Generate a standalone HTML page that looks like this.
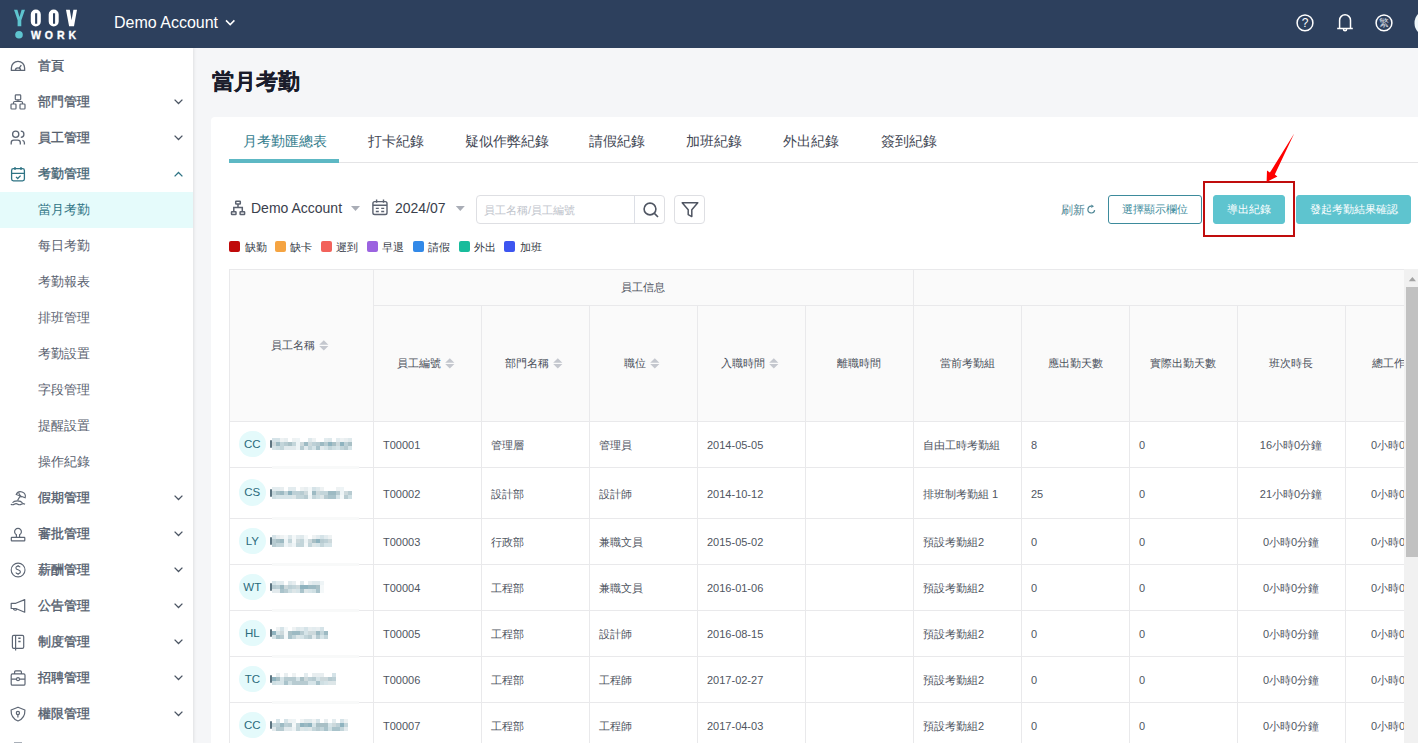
<!DOCTYPE html>
<html><head><meta charset="utf-8"><style>
*{box-sizing:border-box;margin:0;padding:0}
html,body{width:1418px;height:743px;overflow:hidden;background:#f5f6f8;font-family:"Liberation Sans",sans-serif;position:relative}
.abs{position:absolute}
.ab{position:absolute}
#hdr{left:0;top:0;width:1418px;height:48px;background:#2d405d}
#side{left:0;top:48px;width:193px;height:695px;background:#fff;box-shadow:1px 0 3px rgba(0,0,0,.09)}
.si{position:absolute;left:0;width:193px;height:36px;font-size:13px;line-height:36px;color:#5a6270}
.si .t{position:absolute;left:38px;top:0}
.si.p .t{font-weight:normal;-webkit-text-stroke:0.35px #535d6d;color:#535d6d}
.si.act .t{color:#2e7384}
.si.cur{background:#e5fbfb}
.si.cur .t{color:#2e7384}
#title{left:211.5px;top:67px;font-size:21.6px;font-weight:bold;color:#1a1c2b;-webkit-text-stroke:0.25px #1a1c2b;line-height:30px}
#card{left:211px;top:117px;width:1220px;height:640px;background:#fff;border-radius:4px}
.tab{position:absolute;top:131.5px;font-size:14px;color:#3f4653;line-height:18px;white-space:nowrap}
.tab.on{color:#347d8e}
.tb{font-size:14px;line-height:18px;color:#3a404c}
.inp{border:1px solid #dedfe3;border-radius:4px;background:#fff}
.inp span{position:absolute;left:7px;top:6px;font-size:11px;line-height:16px;color:#c0c4cc}
.btn{border-radius:3px;font-size:11px;line-height:27px;text-align:center;white-space:nowrap}
.btn.ol{border:1px solid #3d8b9c;color:#3d8b9c;background:#fff}
.btn.fl{background:#5ec4cf;color:#fff;border:1px solid #5ec4cf}
.lg{font-size:11px;line-height:16px;color:#363c47}
.th{font-size:11px;line-height:16px;color:#4a505b;white-space:nowrap}
.td{font-size:11px;line-height:15px;color:#4f555f;white-space:nowrap}
.av{width:26.6px;height:26.6px;border-radius:50%;background:#e4fafb;color:#2a6b7c;font-size:11.5px;line-height:26.6px;text-align:center}
</style></head><body>
<div id="hdr" class="abs">
<svg class="abs" style="left:0;top:0" width="1418" height="48">
 <path d="M14 9.8h3.4l2.1 7.2 2.1-7.2H25l-3.7 10.4v6H17.6v-6z" fill="#5ec4cf"/>
 <path d="M35.8 9.6a5 5 0 0 1 5 5v6.9a5 5 0 0 1-10 0v-6.9a5 5 0 0 1 5-5zM35.1 13.2v10.6h2.1V13.2z" fill="#fff" fill-rule="evenodd"/>
 <path d="M53.7 9.6a5 5 0 0 1 5 5v6.9a5 5 0 0 1-10 0v-6.9a5 5 0 0 1 5-5zM53 13.2v10.6h2.1V13.2z" fill="#fff" fill-rule="evenodd"/>
 <path d="M66 9.8h3.8l1.8 10.5 1.8-10.5H77l-3 16.4h-4.9z" fill="#fff"/>
 <circle cx="19" cy="34.7" r="3.8" fill="#5ec4cf"/>
 <text x="31" y="39.2" font-family="Liberation Sans" font-weight="bold" font-size="10.5" fill="#fff" stroke="#fff" stroke-width="0.35" textLength="45" lengthAdjust="spacing">WORK</text>
 <path d="M226 20.4l4.2 4.2 4.2-4.2" stroke="#fff" stroke-width="1.5" fill="none"/>
 <g stroke="#fff" fill="none" stroke-width="1.5">
  <circle cx="1305" cy="22.9" r="7.9"/>
  <path d="M1339.6 28.4v-8.2a5.45 5.45 0 0 1 10.9 0v8.2M1337.2 28.6h15.6M1343.5 29.2a1.55 1.55 0 0 0 3.1 0"/>
  <circle cx="1384" cy="22.9" r="7.9"/>
 </g>
 <text x="1305" y="27" font-family="Liberation Sans" font-size="12" fill="#fff" text-anchor="middle">?</text>
 <text x="1384" y="26.3" font-size="9.5" fill="#d9dde3" text-anchor="middle">繁</text>
 <circle cx="1428" cy="23" r="13.5" fill="#eef6f9"/>
</svg>
<div class="abs" style="left:114px;top:13px;font-size:16px;line-height:20px;color:#fff">Demo Account</div>
</div>

<div id="side" class="abs"></div>
<div class="si p" style="top:48px"><span class="t">首頁</span></div>
<div class="si p" style="top:84px"><span class="t">部門管理</span></div>
<div class="si p" style="top:120px"><span class="t">員工管理</span></div>
<div class="si p act" style="top:156px"><span class="t">考勤管理</span></div>
<div class="si s cur" style="top:192px"><span class="t">當月考勤</span></div>
<div class="si s" style="top:228px"><span class="t">每日考勤</span></div>
<div class="si s" style="top:264px"><span class="t">考勤報表</span></div>
<div class="si s" style="top:300px"><span class="t">排班管理</span></div>
<div class="si s" style="top:336px"><span class="t">考勤設置</span></div>
<div class="si s" style="top:372px"><span class="t">字段管理</span></div>
<div class="si s" style="top:408px"><span class="t">提醒設置</span></div>
<div class="si s" style="top:444px"><span class="t">操作紀錄</span></div>
<div class="si p" style="top:480px"><span class="t">假期管理</span></div>
<div class="si p" style="top:516px"><span class="t">審批管理</span></div>
<div class="si p" style="top:552px"><span class="t">薪酬管理</span></div>
<div class="si p" style="top:588px"><span class="t">公告管理</span></div>
<div class="si p" style="top:624px"><span class="t">制度管理</span></div>
<div class="si p" style="top:660px"><span class="t">招聘管理</span></div>
<div class="si p" style="top:696px"><span class="t">權限管理</span></div>
<svg class="abs" style="left:0;top:0" width="193" height="743"><g stroke="#5d6674" fill="none" stroke-width="1.3"><path d="M11.4 70.4V68A6.6 6.6 0 0 1 24.6 68V70.4Z"/><path d="M15.4 70.4A2.6 2.6 0 0 1 20.6 70.4M19.4 67.9L21.3 65.2"/></g><g stroke="#5d6674" fill="none" stroke-width="1.2"><rect x="15.3" y="94.8" width="5.4" height="5" rx="0.8"/><rect x="11" y="104" width="5" height="5" rx="0.8"/><rect x="20" y="104" width="5" height="5" rx="0.8"/><path d="M18 99.8V101.5M13.5 104V102.7a1.2 1.2 0 0 1 1.2-1.2h6.6a1.2 1.2 0 0 1 1.2 1.2V104"/></g><g stroke="#5d6674" fill="none" stroke-width="1.3"><circle cx="15.7" cy="134.2" r="3.1"/><path d="M20.8 131.1a3.1 3.1 0 0 1 0 6.2"/><path d="M11.2 144.6v-1.8a2.6 2.6 0 0 1 2.6-2.6h3.9a2.6 2.6 0 0 1 2.6 2.6v1.8"/><path d="M22.4 140.4a2.6 2.6 0 0 1 2 2.4v1.8"/></g><g stroke="#2e7384" fill="none" stroke-width="1.3"><rect x="11.6" y="168.6" width="12.8" height="12.2" rx="1.8"/><path d="M11.6 173.3h12.8M15 167v3M21 167v3M16 176.9l1.7 1.6 2.9-2.9"/></g><g stroke="#5d6674" fill="none" stroke-width="1.1"><path d="M16.2 494.5a4.8 4.8 0 0 1 9 3.2z"/><path d="M18.7 493l2.6 4.6"/><path d="M20.2 496l-2.6 4.4"/><path d="M12.5 502.8c1.6-2.6 8-2.6 10 0"/><path d="M10.8 504.2c1.3 .9 2.2 .9 3.5 0s2.2-.9 3.5 0 2.2 .9 3.5 0 2.2-.9 3.7 0"/></g><g stroke="#5d6674" fill="none" stroke-width="1.2"><path d="M16.4 537.2v-2.5a3.4 3.4 0 1 1 3.2 0v2.5"/><rect x="11.3" y="537.3" width="13.5" height="3.5" rx="0.6"/></g><g stroke="#5d6674" fill="none" stroke-width="1.1"><circle cx="18.1" cy="570" r="6.9"/><path d="M20.2 567.3c-.4-.8-1.2-1.2-2.1-1.2-1.3 0-2.2.8-2.2 1.8 0 2.4 4.5 1.3 4.5 3.9 0 1.1-1 1.9-2.3 1.9-1 0-1.9-.5-2.3-1.3M18.1 565v1.1M18.1 573.7v1.2"/></g><g stroke="#5d6674" fill="none" stroke-width="1.2" stroke-linejoin="round"><path d="M11.2 603.3h4.6l8.9-3.7v12.6l-8.9-3.7h-4.6z"/><path d="M13.2 608.5a2 2 0 0 0 3.8 .4"/></g><g stroke="#5d6674" fill="none" stroke-width="1.2"><rect x="12.4" y="635.4" width="11.3" height="13" rx="1.3"/><path d="M15.6 635.4v15"/><path d="M18.3 638.3h2.3M18.3 641.5h2.3" stroke-width="1.6"/></g><g stroke="#5d6674" fill="none" stroke-width="1.2"><rect x="11.2" y="673.9" width="13.8" height="11.3" rx="1.3"/><path d="M14.6 673.9v-2a1 1 0 0 1 1-1h4.8a1 1 0 0 1 1 1v2M11.2 679.2h5.3M19.6 679.2h5.4"/><circle cx="18" cy="679.2" r="1.5"/></g><g stroke="#5d6674" fill="none" stroke-width="1.2" stroke-linejoin="round"><path d="M18 707.2l6.9 2.8c.2 5.2-2.3 9.2-6.9 11-4.6-1.8-7.1-5.8-6.9-11z"/><circle cx="17.9" cy="713" r="1.6"/><path d="M17.9 714.6v2.8"/></g><path d="M174.6 99.6l3.9 3.9 3.9-3.9" stroke="#4b5563" stroke-width="1.3" fill="none"/><path d="M174.6 135.6l3.9 3.9 3.9-3.9" stroke="#4b5563" stroke-width="1.3" fill="none"/><path d="M174.6 176.4l3.9-3.9 3.9 3.9" stroke="#2e7384" stroke-width="1.3" fill="none"/><path d="M174.6 495.6l3.9 3.9 3.9-3.9" stroke="#4b5563" stroke-width="1.3" fill="none"/><path d="M174.6 531.6l3.9 3.9 3.9-3.9" stroke="#4b5563" stroke-width="1.3" fill="none"/><path d="M174.6 567.6l3.9 3.9 3.9-3.9" stroke="#4b5563" stroke-width="1.3" fill="none"/><path d="M174.6 603.6l3.9 3.9 3.9-3.9" stroke="#4b5563" stroke-width="1.3" fill="none"/><path d="M174.6 639.6l3.9 3.9 3.9-3.9" stroke="#4b5563" stroke-width="1.3" fill="none"/><path d="M174.6 675.6l3.9 3.9 3.9-3.9" stroke="#4b5563" stroke-width="1.3" fill="none"/><path d="M174.6 711.6l3.9 3.9 3.9-3.9" stroke="#4b5563" stroke-width="1.3" fill="none"/><rect x="14" y="742" width="8" height="1" fill="#a9afb8"/></svg>
<div id="title" class="abs">當月考勤</div>
<div id="card" class="abs"></div>
<div class="tab on" style="left:243px">月考勤匯總表</div>
<div class="tab" style="left:367.5px">打卡紀錄</div>
<div class="tab" style="left:464.5px">疑似作弊紀錄</div>
<div class="tab" style="left:588.5px">請假紀錄</div>
<div class="tab" style="left:685.5px">加班紀錄</div>
<div class="tab" style="left:782.5px">外出紀錄</div>
<div class="tab" style="left:880.5px">簽到紀錄</div>
<div class="abs" style="left:229px;top:162px;width:1189px;height:1px;background:#e4e4e6"></div>
<div class="abs" style="left:229px;top:159px;width:110px;height:4px;background:#5db8c4"></div>
<div class="abs tb" style="left:251px;top:199px">Demo Account</div>
<div class="abs tb" style="left:395px;top:199px">2024/07</div>
<div class="abs inp" style="left:476px;top:195px;width:189px;height:29px"><span>員工名稱/員工編號</span></div>
<div class="abs" style="left:634px;top:196px;width:1px;height:27px;background:#dcdfe6"></div>
<div class="abs inp" style="left:674px;top:195px;width:31px;height:29px"></div>
<div class="abs" style="left:1061px;top:201.5px;font-size:12px;line-height:16px;color:#4f8796">刷新</div>
<div class="abs btn ol" style="left:1108px;top:195px;width:94px;height:29px">選擇顯示欄位</div>
<div class="abs btn fl" style="left:1213px;top:195px;width:72px;height:29px">導出紀錄</div>
<div class="abs btn fl" style="left:1296px;top:195px;width:115px;height:29px">發起考勤結果確認</div>
<div class="abs" style="left:229.0px;top:241px;width:11px;height:11px;border-radius:2px;background:#c00a0a"></div>
<div class="abs lg" style="left:244.5px;top:238.5px">缺勤</div>
<div class="abs" style="left:274.9px;top:241px;width:11px;height:11px;border-radius:2px;background:#f5a442"></div>
<div class="abs lg" style="left:290.4px;top:238.5px">缺卡</div>
<div class="abs" style="left:320.8px;top:241px;width:11px;height:11px;border-radius:2px;background:#f2625b"></div>
<div class="abs lg" style="left:336.3px;top:238.5px">遲到</div>
<div class="abs" style="left:366.7px;top:241px;width:11px;height:11px;border-radius:2px;background:#9b63e0"></div>
<div class="abs lg" style="left:382.2px;top:238.5px">早退</div>
<div class="abs" style="left:412.6px;top:241px;width:11px;height:11px;border-radius:2px;background:#3289e8"></div>
<div class="abs lg" style="left:428.1px;top:238.5px">請假</div>
<div class="abs" style="left:458.5px;top:241px;width:11px;height:11px;border-radius:2px;background:#18bc9c"></div>
<div class="abs lg" style="left:474.0px;top:238.5px">外出</div>
<div class="abs" style="left:504.4px;top:241px;width:11px;height:11px;border-radius:2px;background:#3d55f0"></div>
<div class="abs lg" style="left:519.9px;top:238.5px">加班</div>
<svg class="abs" style="left:0;top:0" width="1418" height="260"><g stroke="#5b6270" fill="none" stroke-width="1.5"><rect x="235.7" y="201.2" width="4.6" height="2.9" rx="0.5"/><rect x="231.5" y="211.8" width="4.5" height="2.7" rx="0.5"/><rect x="240.1" y="211.8" width="4.5" height="2.7" rx="0.5"/><path d="M238 204.1v3.5M233.8 211.8v-4.2h8.5v4.2"/></g><path d="M351 206h9l-4.5 5z" fill="#a9adb6"/><g stroke="#5b6270" fill="none" stroke-width="1.4"><rect x="372.9" y="201.6" width="14.1" height="12.9" rx="1.8"/><path d="M372.9 205.2h14.1M376.6 199.4v3.4M383.5 199.4v3.4M375.8 208.4h3M381.2 208.4h3M375.8 211.5h3M381.2 211.5h3"/></g><path d="M455.8 206h9l-4.5 5z" fill="#a9adb6"/><g stroke="#4f5562" fill="none" stroke-width="1.6"><circle cx="650" cy="209" r="5.9"/><path d="M654.4 213.4l3.6 3.6"/></g><path d="M682.2 202.8h15.6l-6 7v6.8l-3.6-2v-4.8z" stroke="#4f5562" stroke-width="1.5" fill="none" stroke-linejoin="round"/><path d="M1094.65 210.2A3.4 3.4 0 1 1 1091.6 206.2" stroke="#4f8796" stroke-width="1.2" fill="none"/><path d="M1091.3 204.5L1094 206.2L1091.3 207.9z" fill="#4f8796"/><rect x="1204" y="182" width="90" height="54" fill="none" stroke="#c00d0d" stroke-width="2"/><path d="M1294.2 133.6L1274.8 174.4L1277.4 176.4L1266.6 181.9L1267 170.6L1269.9 172.6Z" fill="#ff0000"/></svg>
<div class="abs" style="left:229px;top:269px;width:1175px;height:474px;overflow:hidden"><div class="ab" style="left:0;top:0;width:1300px;height:152px;background:#fafafa"></div><div class="ab" style="left:0px;top:0px;width:1300px;height:1px;background:#e9e9eb"></div><div class="ab" style="left:144px;top:36px;width:1300px;height:1px;background:#e9e9eb"></div><div class="ab" style="left:0px;top:152px;width:1300px;height:1px;background:#e9e9eb"></div><div class="ab" style="left:0px;top:198px;width:1300px;height:1px;background:#e9e9eb"></div><div class="ab" style="left:0px;top:249px;width:1300px;height:1px;background:#e9e9eb"></div><div class="ab" style="left:0px;top:295px;width:1300px;height:1px;background:#e9e9eb"></div><div class="ab" style="left:0px;top:341px;width:1300px;height:1px;background:#e9e9eb"></div><div class="ab" style="left:0px;top:387px;width:1300px;height:1px;background:#e9e9eb"></div><div class="ab" style="left:0px;top:433px;width:1300px;height:1px;background:#e9e9eb"></div><div class="ab" style="left:0px;top:479px;width:1300px;height:1px;background:#e9e9eb"></div><div class="ab" style="left:0px;top:0px;width:1px;height:800px;background:#e9e9eb"></div><div class="ab" style="left:144px;top:0px;width:1px;height:800px;background:#e9e9eb"></div><div class="ab" style="left:252px;top:36px;width:1px;height:800px;background:#e9e9eb"></div><div class="ab" style="left:360px;top:36px;width:1px;height:800px;background:#e9e9eb"></div><div class="ab" style="left:468px;top:36px;width:1px;height:800px;background:#e9e9eb"></div><div class="ab" style="left:576px;top:36px;width:1px;height:800px;background:#e9e9eb"></div><div class="ab" style="left:684px;top:0px;width:1px;height:800px;background:#e9e9eb"></div><div class="ab" style="left:792px;top:36px;width:1px;height:800px;background:#e9e9eb"></div><div class="ab" style="left:900px;top:36px;width:1px;height:800px;background:#e9e9eb"></div><div class="ab" style="left:1008px;top:36px;width:1px;height:800px;background:#e9e9eb"></div><div class="ab" style="left:1116px;top:36px;width:1px;height:800px;background:#e9e9eb"></div><div class="ab" style="left:1224px;top:36px;width:1px;height:800px;background:#e9e9eb"></div><div class="ab th" style="left:42.0px;top:68px">員工名稱</div><svg class="ab" style="left:89.5px;top:70.5px" width="11" height="11"><path d="M0.2 4.7L4.8 0.2L9.4 4.7z M0.2 5.9L4.8 10.4L9.4 5.9z" fill="#c4c7ce"/></svg><div class="ab th" style="left:392.0px;top:10px">員工信息</div><div class="ab th" style="left:168.0px;top:86px">員工編號</div><svg class="ab" style="left:215.5px;top:88.5px" width="11" height="11"><path d="M0.2 4.7L4.8 0.2L9.4 4.7z M0.2 5.9L4.8 10.4L9.4 5.9z" fill="#c4c7ce"/></svg><div class="ab th" style="left:276.0px;top:86px">部門名稱</div><svg class="ab" style="left:323.5px;top:88.5px" width="11" height="11"><path d="M0.2 4.7L4.8 0.2L9.4 4.7z M0.2 5.9L4.8 10.4L9.4 5.9z" fill="#c4c7ce"/></svg><div class="ab th" style="left:395.0px;top:86px">職位</div><svg class="ab" style="left:420.5px;top:88.5px" width="11" height="11"><path d="M0.2 4.7L4.8 0.2L9.4 4.7z M0.2 5.9L4.8 10.4L9.4 5.9z" fill="#c4c7ce"/></svg><div class="ab th" style="left:492.0px;top:86px">入職時間</div><svg class="ab" style="left:539.5px;top:88.5px" width="11" height="11"><path d="M0.2 4.7L4.8 0.2L9.4 4.7z M0.2 5.9L4.8 10.4L9.4 5.9z" fill="#c4c7ce"/></svg><div class="ab th" style="left:608.0px;top:86px">離職時間</div><div class="ab th" style="left:710.5px;top:86px">當前考勤組</div><div class="ab th" style="left:818.5px;top:86px">應出勤天數</div><div class="ab th" style="left:921.0px;top:86px">實際出勤天數</div><div class="ab th" style="left:1040.0px;top:86px">班次時長</div><div class="ab th" style="left:1142.5px;top:86px">總工作時長</div><div class="ab av" style="left:10px;top:161.7px">CC</div><div class="ab" style="left:41px;top:171.0px;width:1.6px;height:8px;background:#5d7480;border-radius:1px"></div><div class="ab" style="left:43px;top:169.0px;width:4px;height:4px;background:#d5e3e8"></div><div class="ab" style="left:43px;top:173.0px;width:4px;height:4px;background:#cdd9dc"></div><div class="ab" style="left:43px;top:177.0px;width:4px;height:4px;background:#d6e4e8"></div><div class="ab" style="left:47px;top:169.0px;width:4px;height:4px;background:#d5e3e8"></div><div class="ab" style="left:47px;top:173.0px;width:4px;height:4px;background:#9dbac3"></div><div class="ab" style="left:47px;top:177.0px;width:4px;height:4px;background:#cfdfe3"></div><div class="ab" style="left:51px;top:169.0px;width:4px;height:4px;background:#eef2f3"></div><div class="ab" style="left:51px;top:173.0px;width:4px;height:4px;background:#c3d5da"></div><div class="ab" style="left:51px;top:177.0px;width:4px;height:4px;background:#c3d5da"></div><div class="ab" style="left:55px;top:169.0px;width:4px;height:4px;background:#e8eef0"></div><div class="ab" style="left:55px;top:173.0px;width:4px;height:4px;background:#b7cbd1"></div><div class="ab" style="left:55px;top:177.0px;width:4px;height:4px;background:#e2eaed"></div><div class="ab" style="left:59px;top:173.0px;width:4px;height:4px;background:#a9c0c6"></div><div class="ab" style="left:59px;top:177.0px;width:4px;height:4px;background:#e2eaed"></div><div class="ab" style="left:63px;top:169.0px;width:4px;height:4px;background:#eef2f3"></div><div class="ab" style="left:63px;top:173.0px;width:4px;height:4px;background:#c3d5da"></div><div class="ab" style="left:63px;top:177.0px;width:4px;height:4px;background:#e2eaed"></div><div class="ab" style="left:67px;top:169.0px;width:4px;height:4px;background:#eef4f6"></div><div class="ab" style="left:67px;top:173.0px;width:4px;height:4px;background:#eef4f6"></div><div class="ab" style="left:67px;top:177.0px;width:4px;height:4px;background:#eef4f6"></div><div class="ab" style="left:71px;top:173.0px;width:4px;height:4px;background:#cdd9dc"></div><div class="ab" style="left:71px;top:177.0px;width:4px;height:4px;background:#b7cbd1"></div><div class="ab" style="left:75px;top:173.0px;width:4px;height:4px;background:#9dbac3"></div><div class="ab" style="left:75px;top:177.0px;width:4px;height:4px;background:#e2eaed"></div><div class="ab" style="left:79px;top:169.0px;width:4px;height:4px;background:#dfe9ec"></div><div class="ab" style="left:79px;top:173.0px;width:4px;height:4px;background:#cdd9dc"></div><div class="ab" style="left:79px;top:177.0px;width:4px;height:4px;background:#c3d5da"></div><div class="ab" style="left:83px;top:169.0px;width:4px;height:4px;background:#eef2f3"></div><div class="ab" style="left:83px;top:173.0px;width:4px;height:4px;background:#bdd0d6"></div><div class="ab" style="left:83px;top:177.0px;width:4px;height:4px;background:#d6e4e8"></div><div class="ab" style="left:87px;top:173.0px;width:4px;height:4px;background:#b7cbd1"></div><div class="ab" style="left:87px;top:177.0px;width:4px;height:4px;background:#a9c3cb"></div><div class="ab" style="left:91px;top:173.0px;width:4px;height:4px;background:#9dbac3"></div><div class="ab" style="left:91px;top:177.0px;width:4px;height:4px;background:#e2eaed"></div><div class="ab" style="left:95px;top:169.0px;width:4px;height:4px;background:#e3ecef"></div><div class="ab" style="left:95px;top:173.0px;width:4px;height:4px;background:#b7cbd1"></div><div class="ab" style="left:95px;top:177.0px;width:4px;height:4px;background:#d6e4e8"></div><div class="ab" style="left:99px;top:169.0px;width:4px;height:4px;background:#dfe9ec"></div><div class="ab" style="left:99px;top:173.0px;width:4px;height:4px;background:#8fb3bf"></div><div class="ab" style="left:99px;top:177.0px;width:4px;height:4px;background:#c3d5da"></div><div class="ab" style="left:103px;top:173.0px;width:4px;height:4px;background:#a9c0c6"></div><div class="ab" style="left:103px;top:177.0px;width:4px;height:4px;background:#cfdfe3"></div><div class="ab" style="left:107px;top:169.0px;width:4px;height:4px;background:#e3ecef"></div><div class="ab" style="left:107px;top:173.0px;width:4px;height:4px;background:#cdd9dc"></div><div class="ab" style="left:107px;top:177.0px;width:4px;height:4px;background:#d6e4e8"></div><div class="ab" style="left:111px;top:169.0px;width:4px;height:4px;background:#eef2f3"></div><div class="ab" style="left:111px;top:173.0px;width:4px;height:4px;background:#8fb3bf"></div><div class="ab" style="left:111px;top:177.0px;width:4px;height:4px;background:#c3d5da"></div><div class="ab" style="left:115px;top:169.0px;width:4px;height:4px;background:#e8eef0"></div><div class="ab" style="left:115px;top:173.0px;width:4px;height:4px;background:#bdd0d6"></div><div class="ab" style="left:115px;top:177.0px;width:4px;height:4px;background:#b7cbd1"></div><div class="ab" style="left:119px;top:169.0px;width:4px;height:4px;background:#dfe9ec"></div><div class="ab" style="left:119px;top:173.0px;width:4px;height:4px;background:#a9c0c6"></div><div class="ab" style="left:119px;top:177.0px;width:4px;height:4px;background:#d6e4e8"></div><div class="ab" style="left:43px;top:197px;width:87px;height:3px;background:#f8f9f9"></div><div class="ab td" style="left:154px;top:169.0px">T00001</div><div class="ab td" style="left:262px;top:169.0px">管理層</div><div class="ab td" style="left:370px;top:169.0px">管理員</div><div class="ab td" style="left:478px;top:169.0px">2014-05-05</div><div class="ab td" style="left:694px;top:169.0px">自由工時考勤組</div><div class="ab td" style="left:802px;top:169.0px">8</div><div class="ab td" style="left:910px;top:169.0px">0</div><div class="ab td" style="left:1008px;top:169.0px;width:108px;text-align:center">16小時0分鐘</div><div class="ab td" style="left:1116px;top:169.0px;width:108px;text-align:center">0小時0分鐘</div><div class="ab av" style="left:10px;top:210.2px">CS</div><div class="ab" style="left:41px;top:219.5px;width:1.6px;height:8px;background:#5d7480;border-radius:1px"></div><div class="ab" style="left:43px;top:217.5px;width:4px;height:4px;background:#e3ecef"></div><div class="ab" style="left:43px;top:221.5px;width:4px;height:4px;background:#c3d5da"></div><div class="ab" style="left:43px;top:225.5px;width:4px;height:4px;background:#cfdfe3"></div><div class="ab" style="left:47px;top:217.5px;width:4px;height:4px;background:#e3ecef"></div><div class="ab" style="left:47px;top:221.5px;width:4px;height:4px;background:#a9c0c6"></div><div class="ab" style="left:47px;top:225.5px;width:4px;height:4px;background:#d6e4e8"></div><div class="ab" style="left:51px;top:217.5px;width:4px;height:4px;background:#e8eef0"></div><div class="ab" style="left:51px;top:221.5px;width:4px;height:4px;background:#9dbac3"></div><div class="ab" style="left:51px;top:225.5px;width:4px;height:4px;background:#d6e4e8"></div><div class="ab" style="left:55px;top:221.5px;width:4px;height:4px;background:#c3d5da"></div><div class="ab" style="left:55px;top:225.5px;width:4px;height:4px;background:#d6e4e8"></div><div class="ab" style="left:59px;top:217.5px;width:4px;height:4px;background:#e3ecef"></div><div class="ab" style="left:59px;top:221.5px;width:4px;height:4px;background:#8fb3bf"></div><div class="ab" style="left:59px;top:225.5px;width:4px;height:4px;background:#d6e4e8"></div><div class="ab" style="left:63px;top:217.5px;width:4px;height:4px;background:#e3ecef"></div><div class="ab" style="left:63px;top:221.5px;width:4px;height:4px;background:#bdd0d6"></div><div class="ab" style="left:63px;top:225.5px;width:4px;height:4px;background:#dde6e8"></div><div class="ab" style="left:67px;top:221.5px;width:4px;height:4px;background:#bdd0d6"></div><div class="ab" style="left:67px;top:225.5px;width:4px;height:4px;background:#c3d5da"></div><div class="ab" style="left:71px;top:217.5px;width:4px;height:4px;background:#eef2f3"></div><div class="ab" style="left:71px;top:221.5px;width:4px;height:4px;background:#b7cbd1"></div><div class="ab" style="left:71px;top:225.5px;width:4px;height:4px;background:#c3d5da"></div><div class="ab" style="left:75px;top:217.5px;width:4px;height:4px;background:#e8eef0"></div><div class="ab" style="left:75px;top:221.5px;width:4px;height:4px;background:#cdd9dc"></div><div class="ab" style="left:75px;top:225.5px;width:4px;height:4px;background:#b7cbd1"></div><div class="ab" style="left:79px;top:217.5px;width:4px;height:4px;background:#f4f8f9"></div><div class="ab" style="left:79px;top:221.5px;width:4px;height:4px;background:#f4f8f9"></div><div class="ab" style="left:79px;top:225.5px;width:4px;height:4px;background:#eef4f6"></div><div class="ab" style="left:83px;top:217.5px;width:4px;height:4px;background:#d5e3e8"></div><div class="ab" style="left:83px;top:221.5px;width:4px;height:4px;background:#9dbac3"></div><div class="ab" style="left:83px;top:225.5px;width:4px;height:4px;background:#c3d5da"></div><div class="ab" style="left:87px;top:217.5px;width:4px;height:4px;background:#dfe9ec"></div><div class="ab" style="left:87px;top:221.5px;width:4px;height:4px;background:#cdd9dc"></div><div class="ab" style="left:87px;top:225.5px;width:4px;height:4px;background:#cfdfe3"></div><div class="ab" style="left:91px;top:217.5px;width:4px;height:4px;background:#eef2f3"></div><div class="ab" style="left:91px;top:221.5px;width:4px;height:4px;background:#c3d5da"></div><div class="ab" style="left:91px;top:225.5px;width:4px;height:4px;background:#dde6e8"></div><div class="ab" style="left:95px;top:221.5px;width:4px;height:4px;background:#c3d5da"></div><div class="ab" style="left:95px;top:225.5px;width:4px;height:4px;background:#b7cbd1"></div><div class="ab" style="left:99px;top:221.5px;width:4px;height:4px;background:#9dbac3"></div><div class="ab" style="left:99px;top:225.5px;width:4px;height:4px;background:#a9c3cb"></div><div class="ab" style="left:103px;top:221.5px;width:4px;height:4px;background:#9dbac3"></div><div class="ab" style="left:103px;top:225.5px;width:4px;height:4px;background:#a9c3cb"></div><div class="ab" style="left:107px;top:217.5px;width:4px;height:4px;background:#eef2f3"></div><div class="ab" style="left:107px;top:221.5px;width:4px;height:4px;background:#b7cbd1"></div><div class="ab" style="left:107px;top:225.5px;width:4px;height:4px;background:#d6e4e8"></div><div class="ab" style="left:111px;top:217.5px;width:4px;height:4px;background:#eef4f6"></div><div class="ab" style="left:111px;top:221.5px;width:4px;height:4px;background:#eef4f6"></div><div class="ab" style="left:111px;top:225.5px;width:4px;height:4px;background:#f4f8f9"></div><div class="ab" style="left:115px;top:221.5px;width:4px;height:4px;background:#cdd9dc"></div><div class="ab" style="left:115px;top:225.5px;width:4px;height:4px;background:#b7cbd1"></div><div class="ab" style="left:119px;top:221.5px;width:4px;height:4px;background:#b7cbd1"></div><div class="ab" style="left:119px;top:225.5px;width:4px;height:4px;background:#cfdfe3"></div><div class="ab" style="left:43px;top:248px;width:87px;height:3px;background:#f8f9f9"></div><div class="ab td" style="left:154px;top:217.5px">T00002</div><div class="ab td" style="left:262px;top:217.5px">設計部</div><div class="ab td" style="left:370px;top:217.5px">設計師</div><div class="ab td" style="left:478px;top:217.5px">2014-10-12</div><div class="ab td" style="left:694px;top:217.5px">排班制考勤組 1</div><div class="ab td" style="left:802px;top:217.5px">25</div><div class="ab td" style="left:910px;top:217.5px">0</div><div class="ab td" style="left:1008px;top:217.5px;width:108px;text-align:center">21小時0分鐘</div><div class="ab td" style="left:1116px;top:217.5px;width:108px;text-align:center">0小時0分鐘</div><div class="ab av" style="left:10px;top:258.7px">LY</div><div class="ab" style="left:41px;top:268.0px;width:1.6px;height:8px;background:#5d7480;border-radius:1px"></div><div class="ab" style="left:43px;top:266.0px;width:4px;height:4px;background:#d5e3e8"></div><div class="ab" style="left:43px;top:270.0px;width:4px;height:4px;background:#b7cbd1"></div><div class="ab" style="left:43px;top:274.0px;width:4px;height:4px;background:#b7cbd1"></div><div class="ab" style="left:47px;top:266.0px;width:4px;height:4px;background:#e8eef0"></div><div class="ab" style="left:47px;top:270.0px;width:4px;height:4px;background:#a9c0c6"></div><div class="ab" style="left:47px;top:274.0px;width:4px;height:4px;background:#c3d5da"></div><div class="ab" style="left:51px;top:266.0px;width:4px;height:4px;background:#eef2f3"></div><div class="ab" style="left:51px;top:270.0px;width:4px;height:4px;background:#9dbac3"></div><div class="ab" style="left:51px;top:274.0px;width:4px;height:4px;background:#c3d5da"></div><div class="ab" style="left:55px;top:266.0px;width:4px;height:4px;background:#f4f8f9"></div><div class="ab" style="left:55px;top:270.0px;width:4px;height:4px;background:#eef4f6"></div><div class="ab" style="left:55px;top:274.0px;width:4px;height:4px;background:#eef4f6"></div><div class="ab" style="left:59px;top:266.0px;width:4px;height:4px;background:#dfe9ec"></div><div class="ab" style="left:59px;top:270.0px;width:4px;height:4px;background:#c3d5da"></div><div class="ab" style="left:59px;top:274.0px;width:4px;height:4px;background:#e2eaed"></div><div class="ab" style="left:63px;top:266.0px;width:4px;height:4px;background:#f4f8f9"></div><div class="ab" style="left:63px;top:270.0px;width:4px;height:4px;background:#f4f8f9"></div><div class="ab" style="left:63px;top:274.0px;width:4px;height:4px;background:#eef4f6"></div><div class="ab" style="left:67px;top:266.0px;width:4px;height:4px;background:#e3ecef"></div><div class="ab" style="left:67px;top:270.0px;width:4px;height:4px;background:#cdd9dc"></div><div class="ab" style="left:67px;top:274.0px;width:4px;height:4px;background:#c3d5da"></div><div class="ab" style="left:71px;top:266.0px;width:4px;height:4px;background:#dfe9ec"></div><div class="ab" style="left:71px;top:270.0px;width:4px;height:4px;background:#c3d5da"></div><div class="ab" style="left:71px;top:274.0px;width:4px;height:4px;background:#c3d5da"></div><div class="ab" style="left:75px;top:266.0px;width:4px;height:4px;background:#f4f8f9"></div><div class="ab" style="left:75px;top:270.0px;width:4px;height:4px;background:#eef4f6"></div><div class="ab" style="left:75px;top:274.0px;width:4px;height:4px;background:#f4f8f9"></div><div class="ab" style="left:79px;top:270.0px;width:4px;height:4px;background:#cdd9dc"></div><div class="ab" style="left:79px;top:274.0px;width:4px;height:4px;background:#c3d5da"></div><div class="ab" style="left:83px;top:266.0px;width:4px;height:4px;background:#eef2f3"></div><div class="ab" style="left:83px;top:270.0px;width:4px;height:4px;background:#a9c0c6"></div><div class="ab" style="left:83px;top:274.0px;width:4px;height:4px;background:#dde6e8"></div><div class="ab" style="left:87px;top:266.0px;width:4px;height:4px;background:#e3ecef"></div><div class="ab" style="left:87px;top:270.0px;width:4px;height:4px;background:#8fb3bf"></div><div class="ab" style="left:87px;top:274.0px;width:4px;height:4px;background:#d6e4e8"></div><div class="ab" style="left:91px;top:266.0px;width:4px;height:4px;background:#d5e3e8"></div><div class="ab" style="left:91px;top:270.0px;width:4px;height:4px;background:#b7cbd1"></div><div class="ab" style="left:91px;top:274.0px;width:4px;height:4px;background:#c3d5da"></div><div class="ab" style="left:95px;top:266.0px;width:4px;height:4px;background:#e3ecef"></div><div class="ab" style="left:95px;top:270.0px;width:4px;height:4px;background:#bdd0d6"></div><div class="ab" style="left:95px;top:274.0px;width:4px;height:4px;background:#d6e4e8"></div><div class="ab" style="left:99px;top:266.0px;width:4px;height:4px;background:#eef2f3"></div><div class="ab" style="left:99px;top:270.0px;width:4px;height:4px;background:#cdd9dc"></div><div class="ab" style="left:99px;top:274.0px;width:4px;height:4px;background:#d6e4e8"></div><div class="ab" style="left:43px;top:294px;width:87px;height:3px;background:#f8f9f9"></div><div class="ab td" style="left:154px;top:266.0px">T00003</div><div class="ab td" style="left:262px;top:266.0px">行政部</div><div class="ab td" style="left:370px;top:266.0px">兼職文員</div><div class="ab td" style="left:478px;top:266.0px">2015-05-02</div><div class="ab td" style="left:694px;top:266.0px">預設考勤組2</div><div class="ab td" style="left:802px;top:266.0px">0</div><div class="ab td" style="left:910px;top:266.0px">0</div><div class="ab td" style="left:1008px;top:266.0px;width:108px;text-align:center">0小時0分鐘</div><div class="ab td" style="left:1116px;top:266.0px;width:108px;text-align:center">0小時0分鐘</div><div class="ab av" style="left:10px;top:304.7px">WT</div><div class="ab" style="left:41px;top:314.0px;width:1.6px;height:8px;background:#5d7480;border-radius:1px"></div><div class="ab" style="left:43px;top:312.0px;width:4px;height:4px;background:#d5e3e8"></div><div class="ab" style="left:43px;top:316.0px;width:4px;height:4px;background:#b7cbd1"></div><div class="ab" style="left:43px;top:320.0px;width:4px;height:4px;background:#e2eaed"></div><div class="ab" style="left:47px;top:312.0px;width:4px;height:4px;background:#e3ecef"></div><div class="ab" style="left:47px;top:316.0px;width:4px;height:4px;background:#bdd0d6"></div><div class="ab" style="left:47px;top:320.0px;width:4px;height:4px;background:#e2eaed"></div><div class="ab" style="left:51px;top:312.0px;width:4px;height:4px;background:#e3ecef"></div><div class="ab" style="left:51px;top:316.0px;width:4px;height:4px;background:#9dbac3"></div><div class="ab" style="left:51px;top:320.0px;width:4px;height:4px;background:#a9c3cb"></div><div class="ab" style="left:55px;top:316.0px;width:4px;height:4px;background:#cdd9dc"></div><div class="ab" style="left:55px;top:320.0px;width:4px;height:4px;background:#b7cbd1"></div><div class="ab" style="left:59px;top:312.0px;width:4px;height:4px;background:#dfe9ec"></div><div class="ab" style="left:59px;top:316.0px;width:4px;height:4px;background:#bdd0d6"></div><div class="ab" style="left:59px;top:320.0px;width:4px;height:4px;background:#cfdfe3"></div><div class="ab" style="left:63px;top:312.0px;width:4px;height:4px;background:#e8eef0"></div><div class="ab" style="left:63px;top:316.0px;width:4px;height:4px;background:#c3d5da"></div><div class="ab" style="left:63px;top:320.0px;width:4px;height:4px;background:#dde6e8"></div><div class="ab" style="left:67px;top:316.0px;width:4px;height:4px;background:#cdd9dc"></div><div class="ab" style="left:67px;top:320.0px;width:4px;height:4px;background:#d6e4e8"></div><div class="ab" style="left:71px;top:312.0px;width:4px;height:4px;background:#dfe9ec"></div><div class="ab" style="left:71px;top:316.0px;width:4px;height:4px;background:#8fb3bf"></div><div class="ab" style="left:71px;top:320.0px;width:4px;height:4px;background:#a9c3cb"></div><div class="ab" style="left:75px;top:316.0px;width:4px;height:4px;background:#8fb3bf"></div><div class="ab" style="left:75px;top:320.0px;width:4px;height:4px;background:#dde6e8"></div><div class="ab" style="left:79px;top:312.0px;width:4px;height:4px;background:#e8eef0"></div><div class="ab" style="left:79px;top:316.0px;width:4px;height:4px;background:#9dbac3"></div><div class="ab" style="left:79px;top:320.0px;width:4px;height:4px;background:#d6e4e8"></div><div class="ab" style="left:83px;top:312.0px;width:4px;height:4px;background:#dfe9ec"></div><div class="ab" style="left:83px;top:316.0px;width:4px;height:4px;background:#9dbac3"></div><div class="ab" style="left:83px;top:320.0px;width:4px;height:4px;background:#cfdfe3"></div><div class="ab" style="left:87px;top:312.0px;width:4px;height:4px;background:#dfe9ec"></div><div class="ab" style="left:87px;top:316.0px;width:4px;height:4px;background:#a9c0c6"></div><div class="ab" style="left:87px;top:320.0px;width:4px;height:4px;background:#a9c3cb"></div><div class="ab" style="left:91px;top:312.0px;width:4px;height:4px;background:#eef4f6"></div><div class="ab" style="left:91px;top:316.0px;width:4px;height:4px;background:#f4f8f9"></div><div class="ab" style="left:91px;top:320.0px;width:4px;height:4px;background:#f4f8f9"></div><div class="ab" style="left:43px;top:340px;width:87px;height:3px;background:#f8f9f9"></div><div class="ab td" style="left:154px;top:312.0px">T00004</div><div class="ab td" style="left:262px;top:312.0px">工程部</div><div class="ab td" style="left:370px;top:312.0px">兼職文員</div><div class="ab td" style="left:478px;top:312.0px">2016-01-06</div><div class="ab td" style="left:694px;top:312.0px">預設考勤組2</div><div class="ab td" style="left:802px;top:312.0px">0</div><div class="ab td" style="left:910px;top:312.0px">0</div><div class="ab td" style="left:1008px;top:312.0px;width:108px;text-align:center">0小時0分鐘</div><div class="ab td" style="left:1116px;top:312.0px;width:108px;text-align:center">0小時0分鐘</div><div class="ab av" style="left:10px;top:350.7px">HL</div><div class="ab" style="left:41px;top:360.0px;width:1.6px;height:8px;background:#5d7480;border-radius:1px"></div><div class="ab" style="left:43px;top:362.0px;width:4px;height:4px;background:#8fb3bf"></div><div class="ab" style="left:43px;top:366.0px;width:4px;height:4px;background:#d6e4e8"></div><div class="ab" style="left:47px;top:358.0px;width:4px;height:4px;background:#eef2f3"></div><div class="ab" style="left:47px;top:362.0px;width:4px;height:4px;background:#d6e4e8"></div><div class="ab" style="left:47px;top:366.0px;width:4px;height:4px;background:#a9c3cb"></div><div class="ab" style="left:51px;top:358.0px;width:4px;height:4px;background:#d5e3e8"></div><div class="ab" style="left:51px;top:362.0px;width:4px;height:4px;background:#cdd9dc"></div><div class="ab" style="left:51px;top:366.0px;width:4px;height:4px;background:#b7cbd1"></div><div class="ab" style="left:55px;top:358.0px;width:4px;height:4px;background:#f4f8f9"></div><div class="ab" style="left:55px;top:362.0px;width:4px;height:4px;background:#f4f8f9"></div><div class="ab" style="left:55px;top:366.0px;width:4px;height:4px;background:#f4f8f9"></div><div class="ab" style="left:59px;top:362.0px;width:4px;height:4px;background:#a9c0c6"></div><div class="ab" style="left:59px;top:366.0px;width:4px;height:4px;background:#a9c3cb"></div><div class="ab" style="left:63px;top:358.0px;width:4px;height:4px;background:#eef2f3"></div><div class="ab" style="left:63px;top:362.0px;width:4px;height:4px;background:#9dbac3"></div><div class="ab" style="left:63px;top:366.0px;width:4px;height:4px;background:#c3d5da"></div><div class="ab" style="left:67px;top:358.0px;width:4px;height:4px;background:#dfe9ec"></div><div class="ab" style="left:67px;top:362.0px;width:4px;height:4px;background:#9dbac3"></div><div class="ab" style="left:67px;top:366.0px;width:4px;height:4px;background:#dde6e8"></div><div class="ab" style="left:71px;top:358.0px;width:4px;height:4px;background:#e3ecef"></div><div class="ab" style="left:71px;top:362.0px;width:4px;height:4px;background:#b7cbd1"></div><div class="ab" style="left:71px;top:366.0px;width:4px;height:4px;background:#d6e4e8"></div><div class="ab" style="left:75px;top:358.0px;width:4px;height:4px;background:#d5e3e8"></div><div class="ab" style="left:75px;top:362.0px;width:4px;height:4px;background:#d6e4e8"></div><div class="ab" style="left:75px;top:366.0px;width:4px;height:4px;background:#c3d5da"></div><div class="ab" style="left:79px;top:358.0px;width:4px;height:4px;background:#e8eef0"></div><div class="ab" style="left:79px;top:362.0px;width:4px;height:4px;background:#cdd9dc"></div><div class="ab" style="left:79px;top:366.0px;width:4px;height:4px;background:#b7cbd1"></div><div class="ab" style="left:83px;top:358.0px;width:4px;height:4px;background:#e3ecef"></div><div class="ab" style="left:83px;top:362.0px;width:4px;height:4px;background:#cdd9dc"></div><div class="ab" style="left:83px;top:366.0px;width:4px;height:4px;background:#e2eaed"></div><div class="ab" style="left:87px;top:358.0px;width:4px;height:4px;background:#e8eef0"></div><div class="ab" style="left:87px;top:362.0px;width:4px;height:4px;background:#9dbac3"></div><div class="ab" style="left:87px;top:366.0px;width:4px;height:4px;background:#b7cbd1"></div><div class="ab" style="left:91px;top:358.0px;width:4px;height:4px;background:#d5e3e8"></div><div class="ab" style="left:91px;top:362.0px;width:4px;height:4px;background:#c3d5da"></div><div class="ab" style="left:91px;top:366.0px;width:4px;height:4px;background:#d6e4e8"></div><div class="ab" style="left:95px;top:362.0px;width:4px;height:4px;background:#9dbac3"></div><div class="ab" style="left:95px;top:366.0px;width:4px;height:4px;background:#c3d5da"></div><div class="ab" style="left:43px;top:386px;width:87px;height:3px;background:#f8f9f9"></div><div class="ab td" style="left:154px;top:358.0px">T00005</div><div class="ab td" style="left:262px;top:358.0px">工程部</div><div class="ab td" style="left:370px;top:358.0px">設計師</div><div class="ab td" style="left:478px;top:358.0px">2016-08-15</div><div class="ab td" style="left:694px;top:358.0px">預設考勤組2</div><div class="ab td" style="left:802px;top:358.0px">0</div><div class="ab td" style="left:910px;top:358.0px">0</div><div class="ab td" style="left:1008px;top:358.0px;width:108px;text-align:center">0小時0分鐘</div><div class="ab td" style="left:1116px;top:358.0px;width:108px;text-align:center">0小時0分鐘</div><div class="ab av" style="left:10px;top:396.7px">TC</div><div class="ab" style="left:41px;top:406.0px;width:1.6px;height:8px;background:#5d7480;border-radius:1px"></div><div class="ab" style="left:43px;top:408.0px;width:4px;height:4px;background:#8fb3bf"></div><div class="ab" style="left:43px;top:412.0px;width:4px;height:4px;background:#cfdfe3"></div><div class="ab" style="left:47px;top:404.0px;width:4px;height:4px;background:#e8eef0"></div><div class="ab" style="left:47px;top:408.0px;width:4px;height:4px;background:#a9c0c6"></div><div class="ab" style="left:47px;top:412.0px;width:4px;height:4px;background:#d6e4e8"></div><div class="ab" style="left:51px;top:408.0px;width:4px;height:4px;background:#d6e4e8"></div><div class="ab" style="left:51px;top:412.0px;width:4px;height:4px;background:#d6e4e8"></div><div class="ab" style="left:55px;top:404.0px;width:4px;height:4px;background:#e8eef0"></div><div class="ab" style="left:55px;top:408.0px;width:4px;height:4px;background:#b7cbd1"></div><div class="ab" style="left:55px;top:412.0px;width:4px;height:4px;background:#a9c3cb"></div><div class="ab" style="left:59px;top:408.0px;width:4px;height:4px;background:#b7cbd1"></div><div class="ab" style="left:59px;top:412.0px;width:4px;height:4px;background:#cfdfe3"></div><div class="ab" style="left:63px;top:404.0px;width:4px;height:4px;background:#eef2f3"></div><div class="ab" style="left:63px;top:408.0px;width:4px;height:4px;background:#b7cbd1"></div><div class="ab" style="left:63px;top:412.0px;width:4px;height:4px;background:#b7cbd1"></div><div class="ab" style="left:67px;top:408.0px;width:4px;height:4px;background:#d6e4e8"></div><div class="ab" style="left:67px;top:412.0px;width:4px;height:4px;background:#b7cbd1"></div><div class="ab" style="left:71px;top:408.0px;width:4px;height:4px;background:#a9c0c6"></div><div class="ab" style="left:71px;top:412.0px;width:4px;height:4px;background:#b7cbd1"></div><div class="ab" style="left:75px;top:404.0px;width:4px;height:4px;background:#e3ecef"></div><div class="ab" style="left:75px;top:408.0px;width:4px;height:4px;background:#cdd9dc"></div><div class="ab" style="left:75px;top:412.0px;width:4px;height:4px;background:#b7cbd1"></div><div class="ab" style="left:79px;top:408.0px;width:4px;height:4px;background:#bdd0d6"></div><div class="ab" style="left:79px;top:412.0px;width:4px;height:4px;background:#d6e4e8"></div><div class="ab" style="left:83px;top:404.0px;width:4px;height:4px;background:#e8eef0"></div><div class="ab" style="left:83px;top:408.0px;width:4px;height:4px;background:#b7cbd1"></div><div class="ab" style="left:83px;top:412.0px;width:4px;height:4px;background:#d6e4e8"></div><div class="ab" style="left:87px;top:404.0px;width:4px;height:4px;background:#e8eef0"></div><div class="ab" style="left:87px;top:408.0px;width:4px;height:4px;background:#d6e4e8"></div><div class="ab" style="left:87px;top:412.0px;width:4px;height:4px;background:#a9c3cb"></div><div class="ab" style="left:91px;top:404.0px;width:4px;height:4px;background:#e8eef0"></div><div class="ab" style="left:91px;top:408.0px;width:4px;height:4px;background:#cdd9dc"></div><div class="ab" style="left:91px;top:412.0px;width:4px;height:4px;background:#cfdfe3"></div><div class="ab" style="left:95px;top:408.0px;width:4px;height:4px;background:#cdd9dc"></div><div class="ab" style="left:95px;top:412.0px;width:4px;height:4px;background:#d6e4e8"></div><div class="ab" style="left:99px;top:408.0px;width:4px;height:4px;background:#b7cbd1"></div><div class="ab" style="left:99px;top:412.0px;width:4px;height:4px;background:#dde6e8"></div><div class="ab" style="left:103px;top:404.0px;width:4px;height:4px;background:#d5e3e8"></div><div class="ab" style="left:103px;top:408.0px;width:4px;height:4px;background:#bdd0d6"></div><div class="ab" style="left:103px;top:412.0px;width:4px;height:4px;background:#dde6e8"></div><div class="ab" style="left:43px;top:432px;width:87px;height:3px;background:#f8f9f9"></div><div class="ab td" style="left:154px;top:404.0px">T00006</div><div class="ab td" style="left:262px;top:404.0px">工程部</div><div class="ab td" style="left:370px;top:404.0px">工程師</div><div class="ab td" style="left:478px;top:404.0px">2017-02-27</div><div class="ab td" style="left:694px;top:404.0px">預設考勤組2</div><div class="ab td" style="left:802px;top:404.0px">0</div><div class="ab td" style="left:910px;top:404.0px">0</div><div class="ab td" style="left:1008px;top:404.0px;width:108px;text-align:center">0小時0分鐘</div><div class="ab td" style="left:1116px;top:404.0px;width:108px;text-align:center">0小時0分鐘</div><div class="ab av" style="left:10px;top:442.7px">CC</div><div class="ab" style="left:41px;top:452.0px;width:1.6px;height:8px;background:#5d7480;border-radius:1px"></div><div class="ab" style="left:43px;top:454.0px;width:4px;height:4px;background:#c3d5da"></div><div class="ab" style="left:43px;top:458.0px;width:4px;height:4px;background:#e2eaed"></div><div class="ab" style="left:47px;top:450.0px;width:4px;height:4px;background:#d5e3e8"></div><div class="ab" style="left:47px;top:454.0px;width:4px;height:4px;background:#bdd0d6"></div><div class="ab" style="left:47px;top:458.0px;width:4px;height:4px;background:#b7cbd1"></div><div class="ab" style="left:51px;top:454.0px;width:4px;height:4px;background:#9dbac3"></div><div class="ab" style="left:51px;top:458.0px;width:4px;height:4px;background:#b7cbd1"></div><div class="ab" style="left:55px;top:450.0px;width:4px;height:4px;background:#d5e3e8"></div><div class="ab" style="left:55px;top:454.0px;width:4px;height:4px;background:#bdd0d6"></div><div class="ab" style="left:55px;top:458.0px;width:4px;height:4px;background:#e2eaed"></div><div class="ab" style="left:59px;top:450.0px;width:4px;height:4px;background:#eef2f3"></div><div class="ab" style="left:59px;top:454.0px;width:4px;height:4px;background:#b7cbd1"></div><div class="ab" style="left:59px;top:458.0px;width:4px;height:4px;background:#e2eaed"></div><div class="ab" style="left:63px;top:450.0px;width:4px;height:4px;background:#eef4f6"></div><div class="ab" style="left:63px;top:454.0px;width:4px;height:4px;background:#f4f8f9"></div><div class="ab" style="left:63px;top:458.0px;width:4px;height:4px;background:#eef4f6"></div><div class="ab" style="left:67px;top:454.0px;width:4px;height:4px;background:#c3d5da"></div><div class="ab" style="left:67px;top:458.0px;width:4px;height:4px;background:#c3d5da"></div><div class="ab" style="left:71px;top:450.0px;width:4px;height:4px;background:#eef2f3"></div><div class="ab" style="left:71px;top:454.0px;width:4px;height:4px;background:#8fb3bf"></div><div class="ab" style="left:71px;top:458.0px;width:4px;height:4px;background:#dde6e8"></div><div class="ab" style="left:75px;top:450.0px;width:4px;height:4px;background:#dfe9ec"></div><div class="ab" style="left:75px;top:454.0px;width:4px;height:4px;background:#9dbac3"></div><div class="ab" style="left:75px;top:458.0px;width:4px;height:4px;background:#d6e4e8"></div><div class="ab" style="left:79px;top:450.0px;width:4px;height:4px;background:#dfe9ec"></div><div class="ab" style="left:79px;top:454.0px;width:4px;height:4px;background:#8fb3bf"></div><div class="ab" style="left:79px;top:458.0px;width:4px;height:4px;background:#dde6e8"></div><div class="ab" style="left:83px;top:450.0px;width:4px;height:4px;background:#eef2f3"></div><div class="ab" style="left:83px;top:454.0px;width:4px;height:4px;background:#d6e4e8"></div><div class="ab" style="left:83px;top:458.0px;width:4px;height:4px;background:#c3d5da"></div><div class="ab" style="left:87px;top:450.0px;width:4px;height:4px;background:#d5e3e8"></div><div class="ab" style="left:87px;top:454.0px;width:4px;height:4px;background:#a9c0c6"></div><div class="ab" style="left:87px;top:458.0px;width:4px;height:4px;background:#b7cbd1"></div><div class="ab" style="left:91px;top:454.0px;width:4px;height:4px;background:#a9c0c6"></div><div class="ab" style="left:91px;top:458.0px;width:4px;height:4px;background:#c3d5da"></div><div class="ab" style="left:95px;top:450.0px;width:4px;height:4px;background:#e8eef0"></div><div class="ab" style="left:95px;top:454.0px;width:4px;height:4px;background:#a9c0c6"></div><div class="ab" style="left:95px;top:458.0px;width:4px;height:4px;background:#a9c3cb"></div><div class="ab" style="left:99px;top:454.0px;width:4px;height:4px;background:#d6e4e8"></div><div class="ab" style="left:99px;top:458.0px;width:4px;height:4px;background:#cfdfe3"></div><div class="ab" style="left:103px;top:450.0px;width:4px;height:4px;background:#e3ecef"></div><div class="ab" style="left:103px;top:454.0px;width:4px;height:4px;background:#cdd9dc"></div><div class="ab" style="left:103px;top:458.0px;width:4px;height:4px;background:#a9c3cb"></div><div class="ab" style="left:107px;top:454.0px;width:4px;height:4px;background:#bdd0d6"></div><div class="ab" style="left:107px;top:458.0px;width:4px;height:4px;background:#a9c3cb"></div><div class="ab" style="left:111px;top:450.0px;width:4px;height:4px;background:#d5e3e8"></div><div class="ab" style="left:111px;top:454.0px;width:4px;height:4px;background:#8fb3bf"></div><div class="ab" style="left:111px;top:458.0px;width:4px;height:4px;background:#c3d5da"></div><div class="ab" style="left:115px;top:450.0px;width:4px;height:4px;background:#eef2f3"></div><div class="ab" style="left:115px;top:454.0px;width:4px;height:4px;background:#c3d5da"></div><div class="ab" style="left:115px;top:458.0px;width:4px;height:4px;background:#e2eaed"></div><div class="ab" style="left:43px;top:478px;width:87px;height:3px;background:#f8f9f9"></div><div class="ab td" style="left:154px;top:450.0px">T00007</div><div class="ab td" style="left:262px;top:450.0px">工程部</div><div class="ab td" style="left:370px;top:450.0px">工程師</div><div class="ab td" style="left:478px;top:450.0px">2017-04-03</div><div class="ab td" style="left:694px;top:450.0px">預設考勤組2</div><div class="ab td" style="left:802px;top:450.0px">0</div><div class="ab td" style="left:910px;top:450.0px">0</div><div class="ab td" style="left:1008px;top:450.0px;width:108px;text-align:center">0小時0分鐘</div><div class="ab td" style="left:1116px;top:450.0px;width:108px;text-align:center">0小時0分鐘</div></div>
<div class="abs" style="left:1404px;top:269px;width:14px;height:480px;background:#f1f1f1"></div>
<svg class="abs" style="left:1404px;top:269px" width="14" height="20"><path d="M4.8 12.2L8.4 8L12 12.2z" fill="#a3a3a3"/></svg>
<div class="abs" style="left:1406px;top:287px;width:12px;height:270px;background:#c1c1c1"></div>
</body></html>
